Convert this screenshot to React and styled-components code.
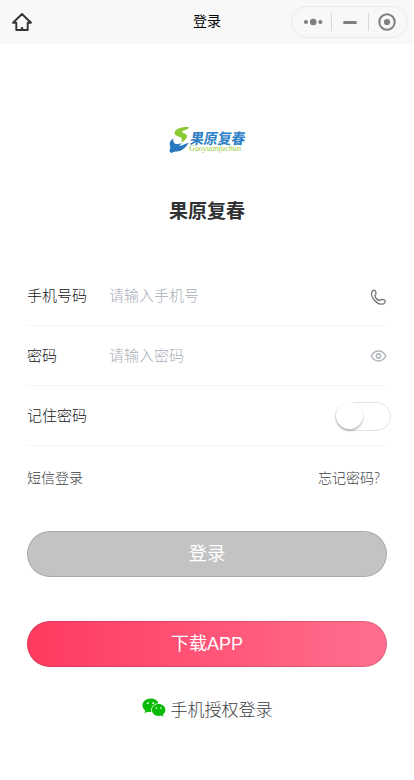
import React, { useState } from 'react';
import styled, { createGlobalStyle } from 'styled-components';

const GlobalStyle = createGlobalStyle`
    *{
        box-sizing:border-box;
    }
    body{
        margin:0;
        background:#fff;
        color:#141416;
        font-family:"Liberation Sans","Noto Sans CJK SC",sans-serif;
        font-weight:300;
    }
    button,input{
        font-family:inherit;
        font-weight:inherit;
    }
    svg{
        display:block;
        flex-shrink:0;
    }
`;

const Page = styled.div`
    height:780px;
    overflow:hidden;
`;

const NavBar = styled.header`
    display:grid;
    grid-template-columns:1fr auto 1fr;
    align-items:center;
    height:44px;
    padding:0 6px 0 11px;
    background:#f8f8f8;
    h1{
        margin:0;
        padding:0 5px 2px 0;
        color:#000;
        font-size:14px;
        line-height:20px;
        font-weight:400;
    }
`;

const Capsule = styled.div`
    display:flex;
    justify-self:end;
    align-items:center;
    width:117px;
    height:32px;
    padding:0 2px 0 3px;
    border:1px solid #ebebeb;
    border-radius:16px;
    div{
        display:flex;
        flex:1;
        justify-content:center;
        align-items:center;
        height:18px;
    }
    div + div{
        border-left:1px solid #d9d9d9;
    }
`;

const Brand = styled.section`
    display:flex;
    flex-direction:column;
    align-items:center;
    height:222px;
    padding-top:82px;
    h2{
        margin:44px 0 0;
        color:#303133;
        font-size:19px;
        line-height:28px;
        font-weight:700;
    }
`;

const Form = styled.form`
    padding:0 27px;
`;

const Row = styled.label`
    display:flex;
    align-items:center;
    height:60px;
    border-bottom:1px solid #f4f4f5;
    font-size:15px;
    span{
        width:82px;
        flex-shrink:0;
        line-height:22px;
    }
    input{
        flex:1;
        min-width:0;
        height:24px;
        padding:0;
        border:0;
        background:transparent;
        font-size:15px;
        :focus{
            outline:none;
        }
    }
    input::placeholder{
        color:#a9aeb8;
        opacity:1;
    }
`;

const SwitchRow = styled(Row)`
    justify-content:space-between;
    margin-right:-4px;
    border-bottom:0;
`;

const Divider = styled.div`
    height:1px;
    margin-top:-1px;
    background:#f4f4f5;
`;

const Switch = styled.button`
    width:56px;
    height:29px;
    padding:0;
    border:1px solid #e2e2e2;
    border-radius:15px;
    background:${(props)=>props.$on ? '#ff3b63':'#fff'};
    i{
        display:block;
        width:27px;
        height:27px;
        margin:-1px 0 0 ${(props)=>props.$on ? '27px':'0'};
        border-radius:50%;
        background:#fff;
        box-shadow:0 2px 2px 0 rgba(0,0,0,.22),0 1px 3px 0 rgba(0,0,0,.05);
    }
`;

const Links = styled.div`
    display:flex;
    justify-content:space-between;
    padding:22px 7px 0 0;
    color:#3c3e42;
    font-family:"Open Sans","Noto Sans CJK SC",sans-serif;
    font-size:14px;
    line-height:20px;
`;

const Button = styled.button`
    display:flex;
    justify-content:center;
    align-items:center;
    width:100%;
    height:46px;
    margin-top:${(props)=>props.$top}px;
    padding:0 0 4px;
    border:1px solid rgba(0,0,0,.13);
    border-radius:23px;
    background:${(props)=>props.$fill};
    background-origin:border-box;
    color:#fff;
    font-size:${(props)=>props.$size}px;
    font-weight:400;
`;

const Wechat = styled.div`
    display:flex;
    justify-content:center;
    align-items:center;
    gap:5px;
    margin-top:31px;
    color:#3c3e42;
    font-size:17px;
    line-height:26px;
    svg{
        margin-top:-6px;
    }
`;

const HomeIcon = () => (
    <svg width="22" height="22" viewBox="0 0 22 22" fill="none" stroke="#333" strokeWidth="1.9" strokeLinejoin="round" strokeLinecap="round">
        <path d="M2 11.7 L11 3 L20 11.7 H16.7 V19 H5.3 V11.7 Z" />
        <path d="M11 16.2 V18" strokeWidth="2.4" strokeLinecap="butt" />
    </svg>
);

const Logo = () => (
    <svg width="76" height="28" viewBox="0 0 76 28" overflow="visible">
        <path d="M19.8 1 C13 .8 6.5 2.5 5.6 6.2 C5 9 8 10 11 11 C13.2 11.9 13.6 13.5 12 16.5 C16 14.5 19 11.8 17.6 9 C16.4 7.1 12.8 7.4 13.2 5.6 C14.2 3.7 19 4.8 19.8 1 Z" fill="#8bc832" />
        <path d="M4.4 12.6 C1.8 14.2 0 16.6 .8 19 C1.6 21.4 1.2 23.2 .3 25 L2.4 27.2 C5 25 8.6 26 12 24.5 C15.2 23 17.2 20.4 19.8 16.8 C16.5 17.6 13.6 19.8 10 20 L13 17 C10 17.8 7.6 18.8 5.8 17.4 C4.2 16 4 14.2 4.4 12.6 Z" fill="#2878bd" />
        <text x="20.3" y="17.8" transform="translate(3.1 0) skewX(-9)" textLength="55" lengthAdjust="spacingAndGlyphs" fontFamily="Noto Sans CJK SC, sans-serif" fontSize="15" fontWeight="700" fill="#2c80c6">果原复春</text>
        <text x="20" y="24.5" textLength="52" lengthAdjust="spacingAndGlyphs" fontFamily="Liberation Serif, serif" fontStyle="italic" fontSize="8" fill="#9aca3c">Guoyuanfuchun</text>
    </svg>
);

const PhoneIcon = () => (
    <svg width="17" height="17" viewBox="0 0 17 17" fill="none" stroke="#777" strokeWidth="1.35" strokeLinejoin="round" style={{ marginTop: 4 }}>
        <path d="M2.2 2.4 C3 1.4 4.2 1 5 1.5 C5.8 2.2 6 3.8 5.9 5 C5.8 5.9 4.8 6 4.9 6.8 C5.4 8.8 7.4 10.9 9.3 11.5 C10.2 11.8 10.4 10.6 11.3 10.5 C12.6 10.4 14.5 10.8 15.1 11.7 C15.5 12.7 14.6 14.3 13.4 14.8 C10.8 15.8 7.2 14.2 4.6 11.5 C2 8.8 .7 4.9 2.2 2.4 Z" />
    </svg>
);

const EyeIcon = () => (
    <svg width="17" height="14" viewBox="0 0 17 14" fill="none" stroke="#b3b7be" strokeWidth="1.6">
        <path d="M1.3 7 C3 3.6 5.4 2 8.5 2 C11.6 2 14 3.6 15.7 7 C14 10.4 11.6 12 8.5 12 C5.4 12 3 10.4 1.3 7 Z" />
        <circle cx="8.5" cy="7" r="2.1" />
    </svg>
);

const WechatIcon = () => (
    <svg width="24" height="20" viewBox="0 0 24 20">
        <path d="M8.6 .5 C4 .5 .5 3.5 .5 7.3 C.5 9.5 1.6 11.4 3.4 12.6 L2.6 15.2 L5.6 13.7 C6.9 14.1 8.3 14.2 9.5 14 C8.2 9.4 11.8 5.4 16.5 5.2 C15.6 2.4 12.5 .5 8.6 .5 Z" fill="#09bb07" />
        <path d="M16.6 6.1 C12.9 6.1 9.9 8.7 9.9 12 C9.9 15.3 12.9 17.9 16.6 17.9 C17.5 17.9 18.4 17.7 19.1 17.4 L21.6 18.8 L20.9 16.5 C22.5 15.4 23.4 13.8 23.4 12 C23.4 8.7 20.3 6.1 16.6 6.1 Z" fill="#09bb07" />
        <g fill="#fff">
            <circle cx="5.8" cy="5.2" r=".9" />
            <circle cx="11.2" cy="5.2" r=".9" />
            <circle cx="14.4" cy="10.1" r=".8" />
            <circle cx="18.9" cy="10.1" r=".8" />
        </g>
    </svg>
);

function App() {
    const [remember, setRemember] = useState(false);
    return (
        <Page>
            <GlobalStyle />
            <NavBar>
                <HomeIcon />
                <h1>登录</h1>
                <Capsule>
                    <div>
                        <svg width="20" height="10" fill="#7f7f7f">
                            <circle cx="3" cy="5" r="2.1" />
                            <circle cx="10.2" cy="5" r="3.3" />
                            <circle cx="17.4" cy="5" r="2.1" />
                        </svg>
                    </div>
                    <div>
                        <svg width="14" height="3"><rect width="14" height="3" rx="1.5" fill="#7f7f7f" /></svg>
                    </div>
                    <div>
                        <svg width="18" height="18">
                            <circle cx="9" cy="9" r="7.7" fill="none" stroke="#7f7f7f" strokeWidth="2" />
                            <circle cx="9" cy="9" r="3.1" fill="#7f7f7f" />
                        </svg>
                    </div>
                </Capsule>
            </NavBar>
            <Brand>
                <Logo />
                <h2>果原复春</h2>
            </Brand>
            <Form onSubmit={(e)=>e.preventDefault()}>
                <Row>
                    <span>手机号码</span>
                    <input type="tel" placeholder="请输入手机号" />
                    <PhoneIcon />
                </Row>
                <Row>
                    <span>密码</span>
                    <input type="password" placeholder="请输入密码" />
                    <EyeIcon />
                </Row>
                <SwitchRow as="div">
                    <span>记住密码</span>
                    <Switch type="button" $on={remember} onClick={()=>{setRemember(!remember)}}><i /></Switch>
                </SwitchRow>
                <Divider />
                <Links>
                    <div>短信登录</div>
                    <div>忘记密码?</div>
                </Links>
                <Button type="submit" $top={43} $size={18.5} $fill="#c3c3c3">登录</Button>
                <Button type="button" $top={44} $size={18} $fill="linear-gradient(to right,#ff3a60,#ff6f8f)">下载APP</Button>
                <Wechat>
                    <WechatIcon />
                    手机授权登录
                </Wechat>
            </Form>
        </Page>
    )
}

export default App
